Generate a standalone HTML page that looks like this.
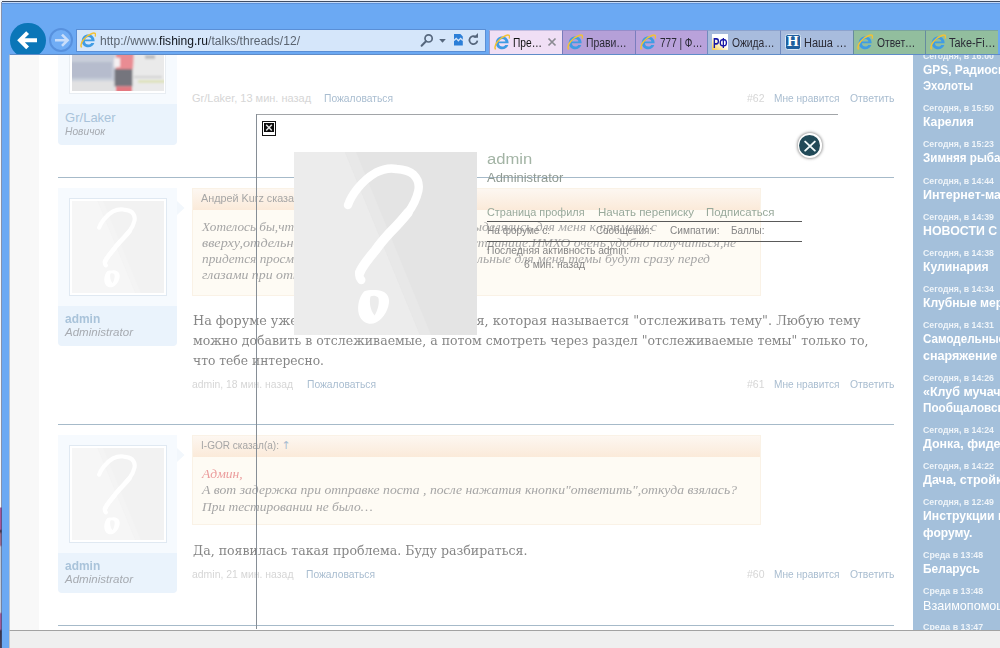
<!DOCTYPE html>
<html lang="ru">
<head>
<meta charset="utf-8">
<title>fishing.ru</title>
<style>
*{box-sizing:border-box;margin:0;padding:0}
html,body{width:1000px;height:648px;overflow:hidden;background:#fff}
body{position:relative;font-family:"Liberation Sans",sans-serif;font-size:11px;color:#8a8a8a}
.abs{position:absolute}
.t{position:absolute;white-space:nowrap;line-height:1}
</style>
</head>
<body>
<svg width="0" height="0" style="position:absolute"><defs>
<g id="ie">
<path d="M14.6 9.3 H4.9 C5 11.3 6.4 12.6 8.3 12.6 C9.6 12.6 10.6 12 11.2 11 H14.3 C13.5 13.6 11.2 15.2 8.2 15.2 C4.4 15.2 1.8 12.6 1.8 8.9 C1.8 5.2 4.5 2.5 8.2 2.5 C12.2 2.5 14.9 5.4 14.6 9.3 Z M5 7.4 H11.4 C11.2 5.9 10 4.9 8.3 4.9 C6.6 4.9 5.3 5.9 5 7.4 Z" fill="#3f9ce4" fill-rule="evenodd"/>
<path d="M1.3 14.9 C-.3 11 5 4 12 1.5 C14.8 .5 16.2 1.6 15.3 3.9" fill="none" stroke="#f2c235" stroke-width="1.5" stroke-linecap="round"/>
</g>
<g id="q">
<rect width="183" height="183" fill="#ececec"/>
<path d="M51 0 L183 0 L183 183 L126 183 Z" fill="#e4e4e4"/>
<path d="M51 0 L62 0 L137 183 L126 183 Z" fill="#e8e8e8"/>
<path d="M54 53 C57 44 67 29 81.5 20.8 C90 16.5 97 16 102.5 17 C110 17.5 116 19.5 119.6 22.7 C124 27 125.5 33 124.3 38.9 C122.5 47 119 54 113.9 60.7 C108 68 101 75.5 94.9 81.7 C90 87 85 93 81.6 98 C74 107 68 115 65.8 120.3 C64.8 123 65.6 126 67.3 128" fill="none" stroke="#fff" stroke-width="8.4" stroke-linecap="round" stroke-linejoin="round"/>
<path d="M113.9 60.7 C108 68 101 75.5 94.9 81.7 C90 87 85 93 81.6 98 C74 107 68 115 65.8 120.3" fill="none" stroke="#fff" stroke-width="9.6" stroke-linecap="round"/>
<path d="M70 139.5 C64 146 62.5 158 66 165 C69 171 76 173.5 82 170.5 C90 166.5 95.5 156 95 148 C94.5 141 88 137.5 80 138 C76 138 72 138 70 139.5 Z M76.5 144.5 C75 150 76.2 158 80.6 163.5 C84 158 85.8 150 84.2 145.5 C82 143.5 78.5 143.5 76.5 144.5 Z" fill="#fff" fill-rule="evenodd"/>
</g>
</defs></svg>

<div class="abs" style="left:0px;top:0px;width:1000px;height:648px;background:#6ba9f3"></div>
<div class="abs" style="left:0px;top:0px;width:1000px;height:1px;background:#eef2f8"></div>
<div class="abs" style="left:2px;top:1px;width:998px;height:1px;background:#3f4d64"></div>
<div class="abs" style="left:2px;top:2px;width:998px;height:1px;background:#c4daf8"></div>
<div class="abs" style="left:2px;top:3px;width:998px;height:1px;background:#5b91da"></div>
<div class="abs" style="left:0px;top:0px;width:2px;height:648px;background:linear-gradient(#f4f6fa 0,#f4f6fa 507px,#a8569a 508px,#a8569a 529px,#3a3040 531px,#9a6a86 534px,#a06a90 545px,#b8c4d8 547px,#c4cede 612px,#a05a98 614px,#a05a98 629px,#3c3448 631px,#4a4058 648px)"></div>
<div class="abs" style="left:1px;top:2px;width:1px;height:646px;background:rgba(60,80,120,.6)"></div>
<div class="abs" style="left:10px;top:22.5px;width:35.5px;height:35.5px;border-radius:50%;background:#0b76b8"></div>
<svg class="abs" style="left:10px;top:22px" width="36" height="36" viewBox="0 0 36 36"><path d="M10.4 18.2 L27 18.2 M17.6 10.6 L10 18.2 L17.6 25.8" fill="none" stroke="#fff" stroke-width="4"/></svg>
<div class="abs" style="left:48.5px;top:28px;width:24px;height:24px;border-radius:50%;border:2px solid #5791de;background:#70adf5"></div>
<svg class="abs" style="left:48.5px;top:28px" width="24" height="24" viewBox="0 0 24 24"><path d="M6 12.2 L18 12.2 M13 6.6 L18.6 12.2 L13 17.8" fill="none" stroke="#c9defa" stroke-width="2.6"/></svg>
<div class="abs" style="left:76px;top:28.5px;width:410px;height:23px;background:#d5e6fa;border:1px solid #5a8fd6"></div>
<svg class="abs" style="left:80px;top:32px" width="16" height="16" viewBox="0 0 16 16"><use href="#ie"/></svg>
<div class="t" style="left:100px;top:34.84px;font:12px/1 'Liberation Sans',sans-serif;color:#5b6470;transform:scaleX(1.0062);transform-origin:0 0">http://www.<span style="color:#10151c">fishing.ru</span>/talks/threads/12/</div>
<svg class="abs" style="left:418px;top:30px" width="66" height="20" viewBox="0 0 66 20">
<circle cx="10.6" cy="8.4" r="3.6" fill="none" stroke="#56677d" stroke-width="1.7"/><path d="M8 11.2 L3.6 15.8" stroke="#56677d" stroke-width="2" stroke-linecap="round"/>
<path d="M21.2 9 L27.8 9 L24.5 12.8 Z" fill="#56677d"/>
<path d="M36 4 L42.4 4 L44.8 6.4 L44.8 15.6 L36 15.6 Z" fill="#2b7fd8"/><path d="M36 10.4 L38.2 8.4 L40.4 10.8 L42.6 8.4 L44.8 10.4" fill="none" stroke="#d5e5f8" stroke-width="1.3"/>
<path d="M58.2 7.2 A4 4 0 1 0 59.4 10.6" fill="none" stroke="#56677d" stroke-width="1.7"/><path d="M55.2 7.8 L60 7.8 L60 3 Z" fill="#56677d"/>
</svg>
<div class="abs" style="left:489px;top:29.5px;width:73px;height:25.5px;background:#f0dff5;border-left:1px solid rgba(60,90,160,.5);border-top:1px solid rgba(60,90,160,.25)"></div>
<svg class="abs" style="left:493.5px;top:34px" width="16" height="16" viewBox="0 0 16 16"><use href="#ie"/></svg>
<div class="t" style="left:513px;top:36.64px;font:12px/1 'Liberation Sans',sans-serif;color:#111;transform:scaleX(0.8533);transform-origin:0 0">Пре…</div>
<div class="abs" style="left:562px;top:29.5px;width:73px;height:24.5px;background:#b5a0d8;border-left:1px solid rgba(60,90,160,.5);border-top:1px solid rgba(60,90,160,.25)"></div>
<svg class="abs" style="left:566.5px;top:34px" width="16" height="16" viewBox="0 0 16 16"><use href="#ie"/></svg>
<div class="t" style="left:586.3px;top:36.64px;font:12px/1 'Liberation Sans',sans-serif;color:#2a2a35;transform:scaleX(0.8648);transform-origin:0 0">Прави…</div>
<div class="abs" style="left:635px;top:29.5px;width:72px;height:24.5px;background:#b9a2db;border-left:1px solid rgba(60,90,160,.5);border-top:1px solid rgba(60,90,160,.25)"></div>
<svg class="abs" style="left:639.5px;top:34px" width="16" height="16" viewBox="0 0 16 16"><use href="#ie"/></svg>
<div class="t" style="left:659.5px;top:36.64px;font:12px/1 'Liberation Sans',sans-serif;color:#2a2a35;transform:scaleX(0.8344);transform-origin:0 0">777 | Ф…</div>
<div class="abs" style="left:707px;top:29.5px;width:73px;height:24.5px;background:#a8bcdd;border-left:1px solid rgba(60,90,160,.5);border-top:1px solid rgba(60,90,160,.25)"></div>
<div class="abs" style="left:711.5px;top:34px;width:16px;height:16px;background:linear-gradient(35deg,#f7c548 0,#fbe9a8 28%,#fff 52%);overflow:hidden"><span class="t" style="left:1px;top:.6px;font-size:15px;font-weight:bold;color:#1717a6;transform:scaleX(.64);transform-origin:0 0">РФ</span></div>
<div class="t" style="left:732.4px;top:36.64px;font:12px/1 'Liberation Sans',sans-serif;color:#2a2a35;transform:scaleX(0.8563);transform-origin:0 0">Ожида…</div>
<div class="abs" style="left:780px;top:29.5px;width:72.5px;height:24.5px;background:#a8bcdd;border-left:1px solid rgba(60,90,160,.5);border-top:1px solid rgba(60,90,160,.25)"></div>
<div class="abs" style="left:784.5px;top:34px;width:16px;height:16px;background:#1f5f9e;border:1px solid #d8e6f5;border-radius:2.5px;overflow:hidden"><span class="t" style="left:1.6px;top:-.6px;font-family:'Liberation Serif',serif;font-size:15px;font-weight:bold;color:#fff">H</span></div>
<div class="t" style="left:804px;top:36.64px;font:12px/1 'Liberation Sans',sans-serif;color:#2a2a35;transform:scaleX(0.9152);transform-origin:0 0">Наша …</div>
<div class="abs" style="left:852.5px;top:29.5px;width:72.5px;height:24.5px;background:#92be9e;border-left:1px solid rgba(60,90,160,.5);border-top:1px solid rgba(60,90,160,.25)"></div>
<svg class="abs" style="left:857px;top:34px" width="16" height="16" viewBox="0 0 16 16"><use href="#ie"/></svg>
<div class="t" style="left:877px;top:36.64px;font:12px/1 'Liberation Sans',sans-serif;color:#2a2a35;transform:scaleX(0.8563);transform-origin:0 0">Ответ…</div>
<div class="abs" style="left:925px;top:29.5px;width:73px;height:24.5px;background:#92be9e;border-left:1px solid rgba(60,90,160,.5);border-top:1px solid rgba(60,90,160,.25)"></div>
<svg class="abs" style="left:929.5px;top:34px" width="16" height="16" viewBox="0 0 16 16"><use href="#ie"/></svg>
<div class="t" style="left:949px;top:36.64px;font:12px/1 'Liberation Sans',sans-serif;color:#2a2a35;transform:scaleX(0.9057);transform-origin:0 0">Take-Fi…</div>
<svg class="abs" style="left:547px;top:37px" width="10" height="10" viewBox="0 0 10 10"><path d="M1.5 1.5 L8.5 8.5 M8.5 1.5 L1.5 8.5" stroke="#8a8a92" stroke-width="1.7"/></svg>
<div class="abs" style="left:9px;top:54px;width:991px;height:576px;background:#fff;border-left:1px solid #b9c4d2;border-top:1px solid #5f8cc8"></div>
<div class="abs" style="left:9px;top:629.5px;width:991px;height:18.5px;background:#efefef;border-top:1px solid #a2a2a2;border-left:1px solid #c8c8c8"></div>
<div class="abs" style="left:10px;top:55px;width:990px;height:575px;overflow:hidden"><div class="abs" style="left:-10px;top:-55px;width:1000px;height:648px">
<div class="abs" style="left:10px;top:55px;width:28.5px;height:575px;background:#f8f8f8"></div>
<div class="abs" style="left:58px;top:55px;width:119px;height:49px;background:#f6fafe"></div>
<div class="abs" style="left:58px;top:103.5px;width:119px;height:41.5px;background:#eaf3fc;border-radius:0 0 4px 4px"></div>
<div class="abs" style="left:69px;top:52px;width:97px;height:42px;background:#fff;border:1px solid #e8edf2"></div>
<svg class="abs" style="left:72px;top:55px" width="92" height="36" viewBox="0 0 92 36"><defs><filter id="bl" x="-5%" y="-5%" width="110%" height="110%"><feGaussianBlur stdDeviation="1.1"/></filter></defs><rect width="92" height="36" fill="#e3e3e5"/><g filter="url(#bl)"><rect x="-3" y="-3" width="46" height="29" fill="#c0c6d4"/><rect x="-3" y="7" width="43" height="16" fill="#abb2c5"/><rect x="-3" y="26" width="46" height="13" fill="#dcdcde"/><rect x="61" y="-3" width="34" height="42" fill="#e7e7e7"/><rect x="73" y="0" width="10" height="4" fill="#b4b4b6"/><rect x="62" y="21" width="28" height="2" fill="#cbcbcb"/><rect x="66" y="25.5" width="28" height="2" fill="#d3da98"/><path d="M44 -3 L62 -3 L61 14 L44 14 Z" fill="#e67a82"/><rect x="42" y="3" width="6" height="9" fill="#f4eef0"/><rect x="42.5" y="14" width="18" height="17.5" fill="#5e5f68"/><rect x="44" y="31.5" width="16" height="7" fill="#e0626c"/></g><rect width="92" height="36" fill="#fff" opacity=".14"/></svg>
<div class="t" style="left:65.1px;top:110.6px;font:13px/1 'Liberation Sans',sans-serif;color:#a9c3da">Gr/Laker</div>
<div class="t" style="left:65.1px;top:126.11px;font:italic 10.5px/1 'Liberation Sans',sans-serif;color:#a7abb1;transform:scaleX(0.9760);transform-origin:0 0">Новичок</div>
<div class="t" style="left:192px;top:92.89px;font:11px/1 'Liberation Sans',sans-serif;color:#d6d6d6">Gr/Laker, 13 мин. назад</div>
<div class="t" style="left:323.6px;top:92.89px;font:11px/1 'Liberation Sans',sans-serif;color:#a9bdd0;transform:scaleX(0.9342);transform-origin:0 0">Пожаловаться</div>
<div class="t" style="left:746.5px;top:92.89px;font:11px/1 'Liberation Sans',sans-serif;color:#d6d6d6;transform:scaleX(0.9532);transform-origin:0 0">#62</div>
<div class="t" style="left:774px;top:92.89px;font:11px/1 'Liberation Sans',sans-serif;color:#a9bdd0;transform:scaleX(0.9213);transform-origin:0 0">Мне нравится</div>
<div class="t" style="left:849.5px;top:92.89px;font:11px/1 'Liberation Sans',sans-serif;color:#a9bdd0;transform:scaleX(0.9462);transform-origin:0 0">Ответить</div>
<div class="abs" style="left:58px;top:177px;width:836px;height:1px;background:#a6bac9"></div>
<div class="abs" style="left:58px;top:188px;width:119px;height:118px;background:#f6fafe"></div>
<div class="abs" style="left:58px;top:305.6px;width:119px;height:40.4px;background:#eaf3fc;border-radius:0 0 4px 4px"></div>
<div class="abs" style="left:68.5px;top:197.8px;width:98px;height:98px;background:#fff;border:1px solid #e0e9f2"></div><svg class="abs" style="left:71.5px;top:200.8px;opacity:.47" width="92" height="92" viewBox="0 0 183 183"><use href="#q"/></svg>
<svg class="abs" style="left:177px;top:200.5px" width="8" height="14" viewBox="0 0 8 14"><path d="M0 0 L7.5 7 L0 14 Z" fill="#f2f7fc"/></svg>
<div class="t" style="left:65.2px;top:312.1px;font:bold 13px/1 'Liberation Sans',sans-serif;color:#a9c3da;transform:scaleX(0.9191);transform-origin:0 0">admin</div>
<div class="t" style="left:65.2px;top:326.61px;font:italic 10.5px/1 'Liberation Sans',sans-serif;color:#a7abb1;transform:scaleX(1.0993);transform-origin:0 0">Administrator</div>
<div class="abs" style="left:192px;top:188px;width:568.5px;height:107.5px;background:#fefbf4;border:1px solid #faf2e6"></div>
<div class="abs" style="left:193px;top:189px;width:566.5px;height:20.5px;background:linear-gradient(#fdf7f1,#fbead9)"></div>
<div class="t" style="left:200.7px;top:192.69px;font:11px/1 'Liberation Sans',sans-serif;color:#a6a6a6;transform:scaleX(0.9832);transform-origin:0 0">Андрей Kurz сказал(а): ↑</div>
<div class="t" style="left:202px;top:220.46px;font:italic 13.3px/1 'Liberation Serif',serif;color:#a6a6a6;transform:scaleX(0.9943);transform-origin:0 0">Хотелось бы,чтобы</div>
<div class="abs" style="left:440px;top:219.6px;width:216.8px;height:16px"><div class="t" style="left:0px;top:0.86px;font:italic 13.3px/1 'Liberation Serif',serif;color:#a6a6a6;transform:scaleX(1.0280);transform-origin:100% 0;left:auto;right:0">выделялись для меня к примеру с</div></div>
<div class="t" style="left:202px;top:236.26px;font:italic 13.3px/1 'Liberation Serif',serif;color:#a6a6a6;transform:scaleX(1.0708);transform-origin:0 0">вверху,отдельной</div>
<div class="abs" style="left:440px;top:235.4px;width:296px;height:16px"><div class="t" style="left:0px;top:0.86px;font:italic 13.3px/1 'Liberation Serif',serif;color:#a6a6a6;transform:scaleX(1.0286);transform-origin:100% 0;left:auto;right:0">странице.ИМХО очень удобно получиться,не</div></div>
<div class="t" style="left:202px;top:252.16px;font:italic 13.3px/1 'Liberation Serif',serif;color:#a6a6a6;transform:scaleX(1.0010);transform-origin:0 0">придется просматривать</div>
<div class="abs" style="left:440px;top:251.3px;width:270px;height:16px"><div class="t" style="left:0px;top:0.86px;font:italic 13.3px/1 'Liberation Serif',serif;color:#a6a6a6;transform:scaleX(1.0216);transform-origin:100% 0;left:auto;right:0">льные для меня темы будут сразу перед</div></div>
<div class="t" style="left:202px;top:268.06px;font:italic 13.3px/1 'Liberation Serif',serif;color:#a6a6a6;transform:scaleX(1.0407);transform-origin:0 0">глазами при открытии</div>
<div class="t" style="left:192.5px;top:314.2px;font:13px/1 'DejaVu Serif',serif;color:#868686;transform:scaleX(0.9841);transform-origin:0 0">На форуме уже есть специальная функция, которая называется "отслеживать тему". Любую тему</div>
<div class="t" style="left:192.5px;top:334.4px;font:13px/1 'DejaVu Serif',serif;color:#868686;transform:scaleX(0.9650);transform-origin:0 0">можно добавить в отслеживаемые, а потом смотреть через раздел "отслеживаемые темы" только то,</div>
<div class="t" style="left:192.5px;top:354.4px;font:13px/1 'DejaVu Serif',serif;color:#868686;transform:scaleX(0.9464);transform-origin:0 0">что тебе интересно.</div>
<div class="t" style="left:192px;top:379.09px;font:11px/1 'Liberation Sans',sans-serif;color:#d6d6d6;transform:scaleX(0.9448);transform-origin:0 0">admin, 18 мин. назад</div>
<div class="t" style="left:306.7px;top:379.09px;font:11px/1 'Liberation Sans',sans-serif;color:#a9bdd0;transform:scaleX(0.9342);transform-origin:0 0">Пожаловаться</div>
<div class="t" style="left:746.5px;top:379.09px;font:11px/1 'Liberation Sans',sans-serif;color:#d6d6d6;transform:scaleX(0.9532);transform-origin:0 0">#61</div>
<div class="t" style="left:774px;top:379.09px;font:11px/1 'Liberation Sans',sans-serif;color:#a9bdd0;transform:scaleX(0.9213);transform-origin:0 0">Мне нравится</div>
<div class="t" style="left:849.5px;top:379.09px;font:11px/1 'Liberation Sans',sans-serif;color:#a9bdd0;transform:scaleX(0.9462);transform-origin:0 0">Ответить</div>
<div class="abs" style="left:58px;top:424.2px;width:836px;height:1px;background:#a6bac9"></div>
<div class="abs" style="left:58px;top:435.2px;width:119px;height:118px;background:#f6fafe"></div>
<div class="abs" style="left:58px;top:552.8px;width:119px;height:40.4px;background:#eaf3fc;border-radius:0 0 4px 4px"></div>
<div class="abs" style="left:68.5px;top:445px;width:98px;height:98px;background:#fff;border:1px solid #e0e9f2"></div><svg class="abs" style="left:71.5px;top:448px;opacity:.47" width="92" height="92" viewBox="0 0 183 183"><use href="#q"/></svg>
<svg class="abs" style="left:177px;top:447.7px" width="8" height="14" viewBox="0 0 8 14"><path d="M0 0 L7.5 7 L0 14 Z" fill="#f2f7fc"/></svg>
<div class="t" style="left:65.2px;top:559.3px;font:bold 13px/1 'Liberation Sans',sans-serif;color:#a9c3da;transform:scaleX(0.9191);transform-origin:0 0">admin</div>
<div class="t" style="left:65.2px;top:573.81px;font:italic 10.5px/1 'Liberation Sans',sans-serif;color:#a7abb1;transform:scaleX(1.0993);transform-origin:0 0">Administrator</div>
<div class="abs" style="left:192px;top:435px;width:568.5px;height:89.6px;background:#fefbf4;border:1px solid #faf2e6"></div>
<div class="abs" style="left:193px;top:436px;width:566.5px;height:20.5px;background:linear-gradient(#fdf7f1,#fbead9)"></div>
<div class="t" style="left:200.7px;top:439.69px;font:11px/1 'Liberation Sans',sans-serif;color:#a6a6a6;transform:scaleX(0.9126);transform-origin:0 0">I-GOR сказал(а): </div>
<div class="t" style="left:281.5px;top:439.69px;font:11px/1 'DejaVu Sans',sans-serif;color:#a9bdd0">↑</div>
<div class="t" style="left:202px;top:467.46px;font:italic 13.3px/1 'Liberation Serif',serif;color:#eb9c9c;transform:scaleX(1.0199);transform-origin:0 0">Админ,</div>
<div class="t" style="left:202px;top:483.46px;font:italic 13.3px/1 'Liberation Serif',serif;color:#a6a6a6;transform:scaleX(1.0279);transform-origin:0 0">А вот задержка при отправке поста , после нажатия кнопки"ответить",откуда взялась?</div>
<div class="t" style="left:202px;top:499.86px;font:italic 13.3px/1 'Liberation Serif',serif;color:#a6a6a6;transform:scaleX(1.0125);transform-origin:0 0">При тестировании не было…</div>
<div class="t" style="left:192.5px;top:544.4px;font:13px/1 'DejaVu Serif',serif;color:#868686;transform:scaleX(0.9661);transform-origin:0 0">Да, появилась такая проблема. Буду разбираться.</div>
<div class="t" style="left:192px;top:569.19px;font:11px/1 'Liberation Sans',sans-serif;color:#d6d6d6;transform:scaleX(0.9494);transform-origin:0 0">admin, 21 мин. назад</div>
<div class="t" style="left:305.7px;top:569.19px;font:11px/1 'Liberation Sans',sans-serif;color:#a9bdd0;transform:scaleX(0.9342);transform-origin:0 0">Пожаловаться</div>
<div class="t" style="left:746.5px;top:569.19px;font:11px/1 'Liberation Sans',sans-serif;color:#d6d6d6;transform:scaleX(0.9532);transform-origin:0 0">#60</div>
<div class="t" style="left:774px;top:569.19px;font:11px/1 'Liberation Sans',sans-serif;color:#a9bdd0;transform:scaleX(0.9213);transform-origin:0 0">Мне нравится</div>
<div class="t" style="left:849.5px;top:569.19px;font:11px/1 'Liberation Sans',sans-serif;color:#a9bdd0;transform:scaleX(0.9462);transform-origin:0 0">Ответить</div>
<div class="abs" style="left:58px;top:625.2px;width:836px;height:1px;background:#a6bac9"></div>
<div class="abs" style="left:913px;top:55px;width:87px;height:575px;background:#a4c0db"></div>
<div class="abs" style="left:913px;top:55px;width:87px;height:575px;overflow:hidden"><div class="t" style="left:9.7px;top:-3.15px;font:bold 8.8px/1 'Liberation Sans',sans-serif;color:rgba(255,255,255,.82);transform:scaleX(0.9954);transform-origin:0 0">Сегодня, в 16:00</div>
<div class="t" style="left:9.7px;top:8.86px;font:bold 12.8px/1 'Liberation Sans',sans-serif;color:#fff;transform:scaleX(0.9331);transform-origin:0 0">GPS, Радиосвязь,</div>
<div class="t" style="left:9.7px;top:25.16px;font:bold 12.8px/1 'Liberation Sans',sans-serif;color:#fff;transform:scaleX(0.8919);transform-origin:0 0">Эхолоты</div>
<div class="t" style="left:9.7px;top:49.3px;font:bold 8.8px/1 'Liberation Sans',sans-serif;color:rgba(255,255,255,.82);transform:scaleX(0.9954);transform-origin:0 0">Сегодня, в 15:50</div>
<div class="t" style="left:9.7px;top:61.31px;font:bold 12.8px/1 'Liberation Sans',sans-serif;color:#fff;transform:scaleX(0.9535);transform-origin:0 0">Карелия</div>
<div class="t" style="left:9.7px;top:85.45px;font:bold 8.8px/1 'Liberation Sans',sans-serif;color:rgba(255,255,255,.82);transform:scaleX(0.9954);transform-origin:0 0">Сегодня, в 15:23</div>
<div class="t" style="left:9.7px;top:97.46px;font:bold 12.8px/1 'Liberation Sans',sans-serif;color:#fff;transform:scaleX(0.9081);transform-origin:0 0">Зимняя рыбалка</div>
<div class="t" style="left:9.7px;top:121.6px;font:bold 8.8px/1 'Liberation Sans',sans-serif;color:rgba(255,255,255,.82);transform:scaleX(0.9954);transform-origin:0 0">Сегодня, в 14:44</div>
<div class="t" style="left:9.7px;top:133.61px;font:bold 12.8px/1 'Liberation Sans',sans-serif;color:#fff;transform:scaleX(0.9781);transform-origin:0 0">Интернет-магазины</div>
<div class="t" style="left:9.7px;top:157.75px;font:bold 8.8px/1 'Liberation Sans',sans-serif;color:rgba(255,255,255,.82);transform:scaleX(0.9954);transform-origin:0 0">Сегодня, в 14:39</div>
<div class="t" style="left:9.7px;top:169.76px;font:bold 12.8px/1 'Liberation Sans',sans-serif;color:#fff;transform:scaleX(0.9660);transform-origin:0 0">НОВОСТИ С ВОДОЁМОВ</div>
<div class="t" style="left:9.7px;top:193.9px;font:bold 8.8px/1 'Liberation Sans',sans-serif;color:rgba(255,255,255,.82);transform:scaleX(0.9954);transform-origin:0 0">Сегодня, в 14:38</div>
<div class="t" style="left:9.7px;top:205.91px;font:bold 12.8px/1 'Liberation Sans',sans-serif;color:#fff;transform:scaleX(0.9540);transform-origin:0 0">Кулинария</div>
<div class="t" style="left:9.7px;top:230.05px;font:bold 8.8px/1 'Liberation Sans',sans-serif;color:rgba(255,255,255,.82);transform:scaleX(0.9954);transform-origin:0 0">Сегодня, в 14:34</div>
<div class="t" style="left:9.7px;top:242.06px;font:bold 12.8px/1 'Liberation Sans',sans-serif;color:#fff;transform:scaleX(0.9489);transform-origin:0 0">Клубные мероприятия</div>
<div class="t" style="left:9.7px;top:266.2px;font:bold 8.8px/1 'Liberation Sans',sans-serif;color:rgba(255,255,255,.82);transform:scaleX(0.9954);transform-origin:0 0">Сегодня, в 14:31</div>
<div class="t" style="left:9.7px;top:278.21px;font:bold 12.8px/1 'Liberation Sans',sans-serif;color:#fff;transform:scaleX(0.9069);transform-origin:0 0">Самодельные снасти,</div>
<div class="t" style="left:9.7px;top:294.51px;font:bold 12.8px/1 'Liberation Sans',sans-serif;color:#fff;transform:scaleX(0.9785);transform-origin:0 0">снаряжение</div>
<div class="t" style="left:9.7px;top:318.65px;font:bold 8.8px/1 'Liberation Sans',sans-serif;color:rgba(255,255,255,.82);transform:scaleX(0.9954);transform-origin:0 0">Сегодня, в 14:26</div>
<div class="t" style="left:9.7px;top:330.66px;font:bold 12.8px/1 'Liberation Sans',sans-serif;color:#fff;transform:scaleX(0.9746);transform-origin:0 0">«Клуб мучачос»</div>
<div class="t" style="left:9.7px;top:346.96px;font:bold 12.8px/1 'Liberation Sans',sans-serif;color:#fff;transform:scaleX(0.9169);transform-origin:0 0">Пообщаловский</div>
<div class="t" style="left:9.7px;top:371.1px;font:bold 8.8px/1 'Liberation Sans',sans-serif;color:rgba(255,255,255,.82);transform:scaleX(0.9954);transform-origin:0 0">Сегодня, в 14:24</div>
<div class="t" style="left:9.7px;top:383.11px;font:bold 12.8px/1 'Liberation Sans',sans-serif;color:#fff;transform:scaleX(0.9716);transform-origin:0 0">Донка, фидер</div>
<div class="t" style="left:9.7px;top:407.25px;font:bold 8.8px/1 'Liberation Sans',sans-serif;color:rgba(255,255,255,.82);transform:scaleX(0.9954);transform-origin:0 0">Сегодня, в 14:22</div>
<div class="t" style="left:9.7px;top:419.26px;font:bold 12.8px/1 'Liberation Sans',sans-serif;color:#fff;transform:scaleX(0.9803);transform-origin:0 0">Дача, стройка</div>
<div class="t" style="left:9.7px;top:443.4px;font:bold 8.8px/1 'Liberation Sans',sans-serif;color:rgba(255,255,255,.82);transform:scaleX(0.9954);transform-origin:0 0">Сегодня, в 12:49</div>
<div class="t" style="left:9.7px;top:455.41px;font:bold 12.8px/1 'Liberation Sans',sans-serif;color:#fff;transform:scaleX(0.9535);transform-origin:0 0">Инструкции по</div>
<div class="t" style="left:9.7px;top:471.71px;font:bold 12.8px/1 'Liberation Sans',sans-serif;color:#fff;transform:scaleX(0.9446);transform-origin:0 0">форуму.</div>
<div class="t" style="left:9.7px;top:495.85px;font:bold 8.8px/1 'Liberation Sans',sans-serif;color:rgba(255,255,255,.82);transform:scaleX(1.0052);transform-origin:0 0">Среда в 13:48</div>
<div class="t" style="left:9.7px;top:507.86px;font:bold 12.8px/1 'Liberation Sans',sans-serif;color:#fff;transform:scaleX(0.9295);transform-origin:0 0">Беларусь</div>
<div class="t" style="left:9.7px;top:532px;font:bold 8.8px/1 'Liberation Sans',sans-serif;color:rgba(255,255,255,.82);transform:scaleX(1.0052);transform-origin:0 0">Среда в 13:48</div>
<div class="t" style="left:9.7px;top:543.85px;font:13px/1 'Liberation Sans',sans-serif;color:#fff;transform:scaleX(0.9679);transform-origin:0 0">Взаимопомощь</div>
<div class="t" style="left:9.7px;top:568.15px;font:bold 8.8px/1 'Liberation Sans',sans-serif;color:rgba(255,255,255,.82);transform:scaleX(1.0052);transform-origin:0 0">Среда в 13:47</div>
<div class="t" style="left:9.7px;top:580.16px;font:bold 12.8px/1 'Liberation Sans',sans-serif;color:#fff;transform:scaleX(0.8660);transform-origin:0 0">Прочее</div></div>
<div class="abs" style="left:256px;top:114.3px;width:582px;height:1px;background:#a2a5a8"></div>
<div class="abs" style="left:255.8px;top:114.3px;width:1px;height:515px;background:#868e96"></div>
<div class="abs" style="left:262.2px;top:121px;width:13.6px;height:14.8px;background:#fff;border:1px solid #111"></div>
<svg class="abs" style="left:264.2px;top:123px" width="10" height="9.4" viewBox="0 0 10 9.4"><rect width="10" height="9.4" fill="#0c0c0c"/><path d="M2.2 1.8 L7.8 7.6 M7.8 1.8 L2.2 7.6" stroke="#e6e6e6" stroke-width="1.5"/></svg>
<svg class="abs" style="left:294px;top:152px" width="183" height="183" viewBox="0 0 183 183"><use href="#q"/></svg>
<div class="t" style="left:486.7px;top:151.38px;font:15.5px/1 'Liberation Sans',sans-serif;color:#a3b4a5;transform:scaleX(1.0730);transform-origin:0 0">admin</div>
<div class="t" style="left:486.7px;top:171.64px;font:12px/1 'Liberation Sans',sans-serif;color:#8f9a93;transform:scaleX(1.0794);transform-origin:0 0">Administrator</div>
<div class="t" style="left:487px;top:206.79px;font:11px/1 'Liberation Sans',sans-serif;color:#98a99b;transform:scaleX(0.9890);transform-origin:0 0">Страница профиля</div>
<div class="t" style="left:597.6px;top:206.79px;font:11px/1 'Liberation Sans',sans-serif;color:#98a99b;transform:scaleX(1.0479);transform-origin:0 0">Начать переписку</div>
<div class="t" style="left:705.7px;top:206.79px;font:11px/1 'Liberation Sans',sans-serif;color:#98a99b;transform:scaleX(1.0394);transform-origin:0 0">Подписаться</div>
<div class="abs" style="left:487px;top:220.6px;width:315px;height:1px;background:#5a5a5a"></div>
<div class="t" style="left:487px;top:225.09px;font:11px/1 'Liberation Sans',sans-serif;color:#858585;transform:scaleX(0.9137);transform-origin:0 0">На форуме с:</div>
<div class="t" style="left:595.6px;top:225.09px;font:11px/1 'Liberation Sans',sans-serif;color:#858585;transform:scaleX(0.8922);transform-origin:0 0">Сообщения:</div>
<div class="t" style="left:669.6px;top:225.09px;font:11px/1 'Liberation Sans',sans-serif;color:#858585;transform:scaleX(0.9188);transform-origin:0 0">Симпатии:</div>
<div class="t" style="left:730.5px;top:225.09px;font:11px/1 'Liberation Sans',sans-serif;color:#858585;transform:scaleX(0.9020);transform-origin:0 0">Баллы:</div>
<div class="abs" style="left:487px;top:240.5px;width:315px;height:1px;background:#5a5a5a"></div>
<div class="t" style="left:487px;top:245.09px;font:11px/1 'Liberation Sans',sans-serif;color:#858585;transform:scaleX(0.9348);transform-origin:0 0">Последняя активность admin:</div>
<div class="t" style="left:524px;top:258.69px;font:11px/1 'Liberation Sans',sans-serif;color:#858585;transform:scaleX(0.9425);transform-origin:0 0">6 мин. назад</div>
<div class="abs" style="left:797.5px;top:133.4px;width:24.4px;height:24.4px;border-radius:50%;background:#fff;box-shadow:0 0 2.5px 1px rgba(40,40,40,.42)"></div>
<div class="abs" style="left:799px;top:134.9px;width:21.4px;height:21.4px;border-radius:50%;background:#214a58"></div>
<svg class="abs" style="left:803.7px;top:139.6px" width="12" height="12" viewBox="0 0 12 12"><path d="M1.2 1.6 L10.8 10.6 M10.8 1.6 L1.2 10.6" stroke="#f2fbfb" stroke-width="1.9" stroke-linecap="round"/></svg>
</div></div>
</body>
</html>
